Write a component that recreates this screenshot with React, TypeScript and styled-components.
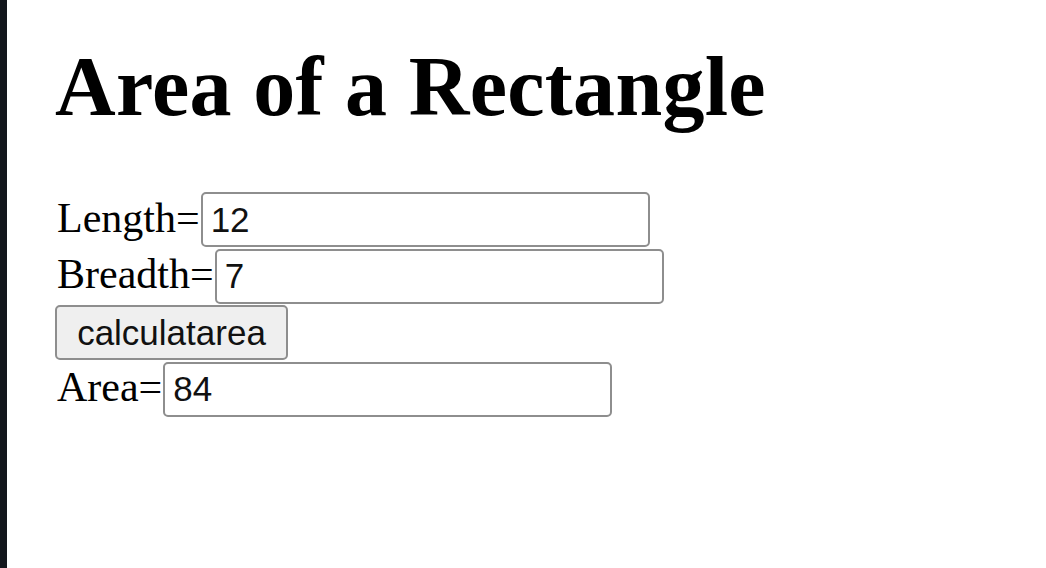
import React from "react";
import styled, { createGlobalStyle } from "styled-components";

const GlobalStyle = createGlobalStyle`
  html, body {
    margin: 0;
    padding: 0;
    background: #ffffff;
    height: 100%;
  }
  #root {
    height: 100%;
  }
`;

const Page = styled.div`
  display: flex;
  height: 568px;
  background: #ffffff;
`;

const EdgeBar = styled.div`
  width: 7px;
  flex: none;
  background: #13171d;
`;

const Main = styled.main`
  flex: 1;
  padding: 38px 0 0 48px;
  font-family: "Liberation Serif", "Times New Roman", serif;
  color: #000;
`;

const Title = styled.h1`
  margin: 0 0 57px 0;
  font-size: 84px;
  font-weight: 700;
  line-height: normal;
  letter-spacing: 0.3px;
`;

const Form = styled.div`
  display: flex;
  flex-direction: column;
  gap: 1.67px;
  align-items: flex-start;
`;

const Row = styled.div`
  display: flex;
  align-items: baseline;
`;

const Label = styled.span`
  font-size: 42px;
  line-height: normal;
  padding-left: 2px;
  margin-right: 1px;
`;

const Field = styled.input`
  box-sizing: border-box;
  width: 449px;
  height: 55px;
  margin: 0;
  padding: 0 8px;
  border: 2px solid #8e8e8e;
  border-radius: 5px;
  background: #fff;
  font-family: "Liberation Sans", Arial, sans-serif;
  font-size: 35px;
  color: #111;
  outline: none;
`;

const Button = styled.button`
  box-sizing: border-box;
  height: 55px;
  width: 233px;
  margin: 0;
  padding: 0 14px;
  border: 2px solid #8e8e8e;
  border-radius: 5px;
  background: #efefef;
  font-family: "Liberation Sans", Arial, sans-serif;
  font-size: 35px;
  color: #111;
`;

export default function App() {
  return (
    <>
      <GlobalStyle />
      <Page>
        <EdgeBar />
        <Main>
          <Title>Area of a Rectangle</Title>
          <Form>
            <Row>
              <Label>Length=</Label>
              <Field defaultValue="12" />
            </Row>
            <Row>
              <Label>Breadth=</Label>
              <Field defaultValue="7" />
            </Row>
            <Row>
              <Button>calculatarea</Button>
            </Row>
            <Row>
              <Label>Area=</Label>
              <Field defaultValue="84" />
            </Row>
          </Form>
        </Main>
      </Page>
    </>
  );
}
